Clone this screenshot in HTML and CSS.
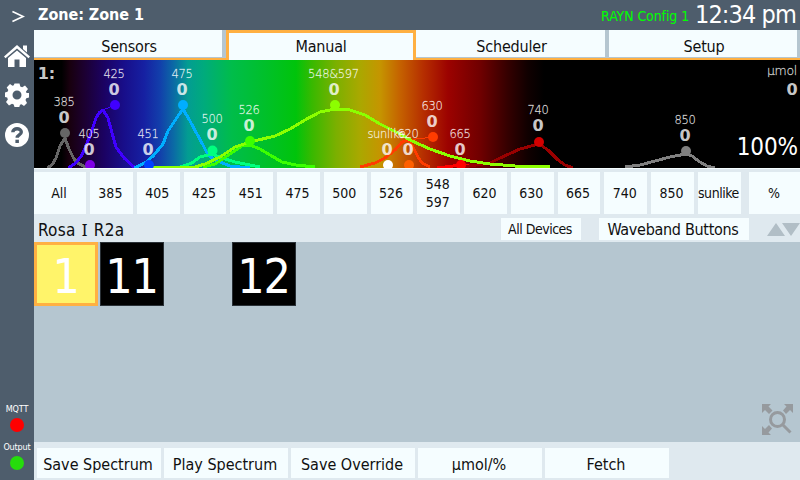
FILE: index.html
```html
<!DOCTYPE html>
<html lang="en">
<head>
<meta charset="utf-8">
<title>Zone 1</title>
<link rel="stylesheet" href="styles.css">
</head>
<body>
<div class="app">
  <aside class="sidebar">
    <svg class="chevron" viewBox="0 0 14 14"><path d="M1 1.500L12.500 7L1 12.500"/></svg>
    <svg class="icon" viewBox="0 0 26 24"><path d="M13 1L26 12.500L24.500 14.200L13 4.500L1.500 14.200L0 12.500ZM19 1.500H23V8.500L19 5ZM13 6.500L22 14V23H15.500V15.500H10.500V23H4V14Z"/></svg>
    <svg class="icon gear" viewBox="-12 -12 24 24"><path fill-rule="evenodd" d="M-2.500-11.500H2.500L3.300-8.500L5.200-7.700L8-9.500L11-6L9-3.500L9.500-2H12V2.500L9.300 3.200L8.500 5L10 8L7 11L4.500 9.300L3 9.800L2.300 12H-2.500L-3.300 9.500L-5 8.700L-8 10.500L-11 7L-9.200 4.600L-9.800 2.500L-12 2V-2.500L-9.500-3.200L-8.700-5L-10.300-7.500L-7-11L-4.500-9.200L-3.200-9.700ZM0-4.500A4.500 4.500 0 1 0 0 4.500A4.500 4.500 0 1 0 0-4.500Z"/></svg>
    <svg class="icon help" viewBox="0 0 24 24"><circle cx="12" cy="12" r="12"/><path class="mark" d="M7.800 9.200C7.800 4.600 16.300 4.600 16.300 9C16.300 12 12.200 11.800 12.200 14.800"/><rect class="dot" x="10.400" y="16.700" width="3.500" height="3.300"/></svg>
    <div class="status mqtt">MQTT<i class="led red"></i></div>
    <div class="status output">Output<i class="led green"></i></div>
  </aside>
  <main class="main">
    <header class="topbar">
      <h1>Zone: Zone 1</h1>
      <span class="config">RAYN Config 1</span>
      <span class="clock">12:34 pm</span>
    </header>
    <nav class="tabs">
      <div class="tab">Sensors</div>
      <div class="tab active">Manual</div>
      <div class="tab">Scheduler</div>
      <div class="tab">Setup</div>
    </nav>
    <svg class="chart" viewBox="34 60 766 108">
      <defs>
        <linearGradient id="spectrum" gradientUnits="userSpaceOnUse" x1="0" x2="800" y1="0" y2="0">
          <stop offset=".077" stop-color="#000"/><stop offset=".087" stop-color="#18000e"/>
          <stop offset=".105" stop-color="#1c0030"/><stop offset=".13" stop-color="#1b0262"/>
          <stop offset=".155" stop-color="#180e8a"/><stop offset=".18" stop-color="#1620a2"/>
          <stop offset=".2" stop-color="#123fab"/><stop offset=".217" stop-color="#0b6aa5"/>
          <stop offset=".235" stop-color="#039d92"/><stop offset=".255" stop-color="#00ab7c"/>
          <stop offset=".29" stop-color="#00bd4a"/><stop offset=".33" stop-color="#00c02b"/>
          <stop offset=".37" stop-color="#00c40b"/><stop offset=".39" stop-color="#38b900"/>
          <stop offset=".42" stop-color="#7bb000"/><stop offset=".45" stop-color="#aaa800"/>
          <stop offset=".475" stop-color="#c59500"/><stop offset=".5" stop-color="#c56200"/>
          <stop offset=".53" stop-color="#b52d00"/><stop offset=".56" stop-color="#9c0200"/>
          <stop offset=".6" stop-color="#700000"/><stop offset=".635" stop-color="#340000"/>
          <stop offset=".66" stop-color="#100000"/><stop offset=".68" stop-color="#000"/>
        </linearGradient>
      </defs>
      <rect x="34" y="60" width="766" height="108" fill="url(#spectrum)"/>
      <g class="curves">
        <path stroke="#666" d="M47 168L52 165L56 158L60 146L65 138L69 149L74 159L79 164L88 168"/>
        <path stroke="#4000ff" d="M68 168L76 163L82 155L90 136L96 118L99 113L103 110L108 118L112 133L116 147L124 158L134 167"/>
        <path class="thin" stroke="#4000ff" d="M103 110L115 105"/>
        <path stroke="#00aeff" d="M134 168L145 163L153 156L163 144L168 131L178 116L183 109L190 121L197 134L203 145L208 155L215 160L230 166L250 168"/>
        <path stroke="#00ff7f" d="M180 167L192 163L200 157L212 154L222 158L235 162L260 167"/>
        <path stroke="#3cff00" d="M203 167L215 164L230 154L242 146L250 145L260 149L270 155L282 162L296 165L315 167"/>
        <path stroke="#ff3c00" d="M360 167L375 163L385 158L395 150L402 142L408 140L413 147L418 157L422 163L430 167"/>
        <path class="thin" stroke="#ff3c00" d="M408 140L433 137"/>
        <path stroke="#f00" d="M437 168L461 165L475 166"/>
        <path stroke="#900" d="M462 167L490 163L500 158L520 149L535 145L539 144L548 150L558 160L565 165L573 168"/>
        <path stroke="#8cff00" d="M150 167L195 167L205 164L220 157L235 147L250 142L275 136L290 129L305 120L320 112L335 109L350 110L365 115L380 124L400 134L412 141L430 149L450 156L470 161L490 164L515 166L550 167"/>
        <path stroke="#808080" d="M625 167L640 165L655 161L670 157L686 154L692 156L700 162L707 166L715 168"/>
      </g>
      <g class="dots">
        <circle cx="65" cy="133" r="5" fill="#666"/><circle cx="90" cy="165" r="5" fill="#8000e6"/>
        <circle cx="115" cy="105" r="5" fill="#4000ff"/><circle cx="149" cy="165" r="5" fill="#0040ff"/>
        <circle cx="183" cy="105" r="5" fill="#00aeff"/><circle cx="212.500" cy="150.500" r="5" fill="#00ff7f"/>
        <circle cx="250" cy="141" r="5" fill="#3cff00"/><circle cx="335" cy="105" r="5" fill="#8cff00"/>
        <circle cx="388" cy="165" r="5" fill="#fff"/><circle cx="409" cy="165" r="5" fill="#ff6000"/>
        <circle cx="433" cy="137" r="5" fill="#ff3c00"/><circle cx="461" cy="165" r="5" fill="#f00"/>
        <circle cx="539" cy="142" r="5" fill="#d40000"/><circle cx="686" cy="151" r="5" fill="#808080"/>
      </g>
      <g class="names">
        <text x="64" y="106">385</text><text x="89" y="138">405</text><text x="114" y="78">425</text>
        <text x="148" y="138">451</text><text x="182" y="78">475</text><text x="212" y="123">500</text>
        <text x="249" y="114">526</text><text x="333.500" y="78">548&amp;597</text><text x="386.500" y="138">sunlike</text>
        <text x="408" y="138">620</text><text x="432" y="110">630</text><text x="460" y="138">665</text>
        <text x="538" y="114">740</text><text x="685" y="124">850</text><text class="unit" x="797" y="75">µmol</text>
      </g>
      <g class="values">
        <text x="64" y="123">0</text><text x="89" y="155">0</text><text x="114" y="95">0</text>
        <text x="148" y="155">0</text><text x="182" y="95">0</text><text x="212" y="140">0</text>
        <text x="249" y="131">0</text><text x="334" y="95">0</text><text x="387" y="155">0</text>
        <text x="408" y="155">0</text><text x="432" y="127">0</text><text x="460" y="155">0</text>
        <text x="538" y="131">0</text><text x="685" y="141">0</text><text x="792" y="95">0</text>
        <text x="46.500" y="79">1:</text>
      </g>
      <text class="level" x="798" y="155">100%</text>
    </svg>
    <div class="bands">
      <button>All</button><button>385</button><button>405</button><button>425</button><button>451</button><button>475</button><button>500</button><button>526</button><button>548<br>597</button><button>620</button><button>630</button><button>665</button><button>740</button><button>850</button><button class="sunlike">sunlike</button><button class="percent">%</button>
    </div>
    <div class="devicebar">
      <span class="device">Rosa <span class="serif-i">I</span> R2a</span>
      <button class="all-devices">All Devices</button>
      <button class="waveband">Waveband Buttons</button>
      <svg class="arrows" viewBox="0 0 33 13"><path d="M0 13L9 0L18 13ZM15 0H33L24 13Z"/></svg>
    </div>
    <section class="canvas">
      <div class="tile selected">1</div>
      <div class="tile">11</div>
      <div class="tile third">12</div>
      <svg class="fit" viewBox="0 0 31 31"><path d="M0 0H9L6.500 2.500L10.500 6.500L7 10L3 6L0 9ZM31 0V9L28 6L24 10L21 6.500L24.500 2.500L22 0ZM0 31V22L3 25L7 21L10 24.500L6.500 28.500L9 31Z"/><circle cx="15.500" cy="15.500" r="7"/><path class="handle" d="M20.500 20.500L28.500 28.500"/></svg>
    </section>
    <footer class="actions">
      <button>Save Spectrum</button><button>Play Spectrum</button><button>Save Override</button><button>µmol/%</button><button>Fetch</button>
    </footer>
  </main>
</div>
</body>
</html>
```
FILE: styles.css
```css
* { box-sizing: border-box; }
body {
  margin: 0;
  font-family: "DejaVu Sans Condensed", "DejaVu Sans", sans-serif;
  font-stretch: condensed;
  color: #101010;
}
button {
  padding: 0;
  border: 0;
  background: #f5fdff;
  color: inherit;
  font: inherit;
  white-space: nowrap;
}
.app { display: flex; width: 800px; height: 480px; overflow: hidden; background: #dfe9ef; }
.sidebar {
  width: 34px;
  flex: none;
  display: flex;
  flex-direction: column;
  align-items: center;
  background: #4e5d6c;
  color: #fff;
}
.chevron { width: 14px; height: 13px; margin: 10px 0 21px 2px; fill: none; stroke: #fff; stroke-width: 1.8; }
.icon { width: 26px; height: 24px; fill: #fff; }
.gear { width: 24px; margin-top: 15px; }
.help { width: 24px; margin-top: 16px; }
.mark { fill: none; stroke: #4e5d6c; stroke-width: 3.4; }
.dot { fill: #4e5d6c; }
.status { display: flex; flex-direction: column; align-items: center; font-size: 9px; line-height: 10px; letter-spacing: -.15px; }
.mqtt { margin-top: auto; }
.output { margin: 10px 0; }
.led { width: 14px; height: 14px; margin-top: 4px; border-radius: 50%; }
.red { background: #f00; }
.green { background: #26dc0c; }
.main { width: 766px; display: flex; flex-direction: column; }
.topbar { height: 30px; display: flex; align-items: center; padding: 1px 4px; background: #4e5d6c; color: #fff; white-space: nowrap; }
h1 { margin: 0; padding-bottom: 1px; font-size: 16px; letter-spacing: -.05px; }
.config { margin-left: auto; padding-top: 1px; color: #0f0; font-size: 14px; letter-spacing: -.1px; }
.clock { margin-left: 6px; font-size: 25px; line-height: 28px; letter-spacing: -.9px; }
.tabs { display: grid; grid-template-columns: 188px 190px 189px 188px; column-gap: 0; height: 30px; background: #b5c6d0; border-bottom: 2px solid #ffb042; }
.tab { height: 27px; background: #f5fdff; display: flex; align-items: center; justify-content: center; padding: 5px 0 0 2px; font-size: 16px; letter-spacing: -.2px; }
.tab:nth-child(2) { margin-left: 4px; margin-right: -4px; }
.tab:nth-child(3) { margin-left: 4px; margin-right: -4px; }
.tab:nth-child(4) { margin-left: 8px; margin-right: -8px; }
.tab.active { height: 30px; padding: 4px 0 4px; border: 3px solid #ffb042; border-bottom: 0; }
.chart { width: 766px; height: 108px; display: block; flex: none; }
.curves { fill: none; stroke-width: 3; stroke-linejoin: round; shape-rendering: crispEdges; }
.curves .thin { stroke-width: 1; }
.names, .values { fill: rgba(255, 255, 255, .8); text-anchor: middle; }
.names { fill: rgba(255, 255, 255, .86); stroke: rgba(255, 255, 255, .5); stroke-width: .3; font-family: "DejaVu Sans Light", "DejaVu Sans", sans-serif; font-weight: 200; font-stretch: normal; font-size: 11.5px; letter-spacing: -.3px; }
.names .unit { text-anchor: end; font-size: 12.5px; }
.values { font-family: "DejaVu Sans", sans-serif; font-stretch: normal; font-size: 16px; font-weight: bold; }
.level { fill: #fff; font-size: 24px; text-anchor: end; letter-spacing: -.1px; }
.bands {
  display: grid;
  grid-template-columns: 52px repeat(13, 42.77px) 43px 52px;
  column-gap: 4px;
  height: 46px;
  padding-top: 3px;
  border-top: 1px solid #f5fdff;
  font-size: 14px;
  line-height: 18px;
  letter-spacing: -.2px;
}
.bands button { padding-right: 2px; }
.bands .percent { margin-left: 4px; margin-right: -4px; }
.bands .sunlike { overflow: hidden; letter-spacing: -.45px; }
.devicebar { height: 28px; display: flex; align-items: center; padding-left: 4px; padding-top: 2px; white-space: nowrap; }
.device { width: 463px; padding-top: 1px; font-size: 17px; line-height: 22px; letter-spacing: .25px; }
.serif-i { margin: 0 1px; font-family: "Noto Sans", sans-serif; }
.all-devices { width: 80px; height: 22px; padding-right: 2px; font-size: 14px; letter-spacing: -.5px; }
.waveband { width: 150px; height: 22px; padding-right: 2px; margin-left: 18px; font-size: 16px; letter-spacing: -.3px; }
.arrows { width: 33px; height: 13px; margin-left: 18px; fill: #b1bec6; }
.canvas { position: relative; display: flex; align-items: flex-start; gap: 2px; height: 200px; background: #b5c6d0; }
.tile { width: 64px; height: 64px; border: 1px solid #293036; background: #000; color: #fff; font-size: 48px; line-height: 66px; text-align: center; letter-spacing: -1.3px; text-indent: -1px; }
.selected { border: 3px solid #ffb042; background: #fff46a; line-height: 62px; }
.third { margin-left: 66px; }
.fit { position: absolute; right: 7px; bottom: 7px; width: 31px; height: 31px; fill: #969a9e; }
.fit circle, .handle { fill: none; stroke: #969a9e; stroke-width: 3; }
.actions { display: grid; grid-template-columns: repeat(5, 124px); gap: 3px; height: 38px; padding: 6px 3px 2px; font-size: 16px; letter-spacing: -.65px; }
.actions button { padding: 2px 2px 0 0; }
```
